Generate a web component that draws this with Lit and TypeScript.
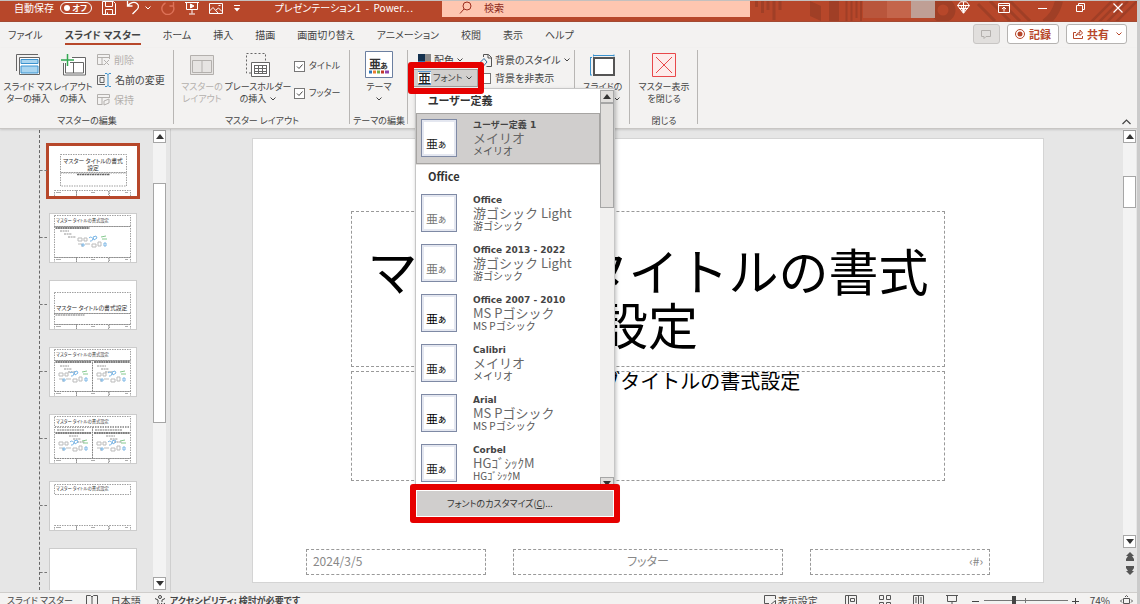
import { LitElement, html, svg, css } from "lit";
import { customElement, state } from "lit/decorators.js";
import { classMap } from "lit/directives/class-map.js";

const chevron = html`<svg class="chev" width="6" height="4" viewBox="0 0 6 4"><path d="M.5 .5 3 3 5.5 .5" fill="none" stroke="currentColor"/></svg>`;
const up = html`<svg width="8" height="5" viewBox="0 0 8 5"><path d="M0 5 4 0 8 5z" fill="#333"/></svg>`;
const down = html`<svg width="8" height="5" viewBox="0 0 8 5"><path d="M0 0 4 5 8 0z" fill="#333"/></svg>`;

interface FontTheme { name: string; heading: string; body: string; tone: string; }

const themes: FontTheme[] = [
  { name: "Office", heading: "游ゴシック Light", body: "游ゴシック", tone: "light" },
  { name: "Office 2013 - 2022", heading: "游ゴシック Light", body: "游ゴシック", tone: "light" },
  { name: "Office 2007 - 2010", heading: "MS Pゴシック", body: "MS Pゴシック", tone: "dark" },
  { name: "Calibri", heading: "メイリオ", body: "メイリオ", tone: "mid" },
  { name: "Arial", heading: "MS Pゴシック", body: "MS Pゴシック", tone: "dark" },
  { name: "Corbel", heading: "HGｺﾞｼｯｸM", body: "HGｺﾞｼｯｸM", tone: "mid" },
];
const custom: FontTheme = { name: "ユーザー定義 1", heading: "メイリオ", body: "メイリオ", tone: "mid" };

const tabs = ["ファイル", "スライド マスター", "ホーム", "挿入", "描画", "画面切り替え", "アニメーション", "校閲", "表示", "ヘルプ"];

const frame = (x: number, y: number, w: number, h: number) =>
  svg`<rect x=${x} y=${y} width=${w} height=${h} fill="none" stroke="#777" stroke-width=".7" stroke-dasharray="1.5 1"/>`;
const footers = svg`${frame(5.5, 44.5, 22, 7)}${frame(27.5, 44.5, 32, 7)}${frame(60.5, 44.5, 21, 7)}
  <path d="M7 46.5h5M42 46.5h4M76 46.5h3" stroke="#999" stroke-width=".8"/>`;
const caption = (x: number, y: number, size: number, text: string, anchor = "start") =>
  svg`<text x=${x} y=${y} font-size=${size} text-anchor=${anchor} fill="#333">${text}</text>`;
const picker = (x: number, y: number) => svg`
  <g transform="translate(${x} ${y})" fill="none" stroke-width="1">
    <path d="M0 3h4v3h-4zM6 3h3v3H6zM20 7h3v4h-3zM7 9h5M14 9h4v3h-4zM0 9h4v3" stroke="#bbb"/>
    <path d="M11 3a2 2 0 1 1 1 3M15 2l3-1 1 2-3 2zM4 9h2v2H4zM26 8h2v3h-2z" stroke="#7ab6e6"/>
    <path d="M23 2l5-1M24 4h5" stroke="#86c98f"/>
  </g>`;
const bullets = (x: number, y: number) => svg`
  <path d="M${x} ${y}h9M${x + 4} ${y + 3}h8M${x + 8} ${y + 6}h8" stroke="#888" stroke-width=".9" stroke-dasharray="2 .6"/>`;
const miniTitle = "マスター タイトルの書式設定";
const strip = "M6.5 15h34";

const thumbs = [
  svg`${frame(11.5, 8.5, 66, 18)}${frame(11.5, 27, 66, 13)}
    ${caption(44, 17, 5.8, "マスター タイトルの書式", "middle")}${caption(44, 24, 5.8, "設定", "middle")}
    <path d="M28 28.5h33" stroke="#666" stroke-width="1.4" stroke-dasharray="2 .5"/>${footers}`,
  svg`${frame(5.5, 2.5, 76, 11)}${frame(5.5, 13.5, 76, 31)}${caption(7, 9, 4.3, miniTitle)}
    <path d=${strip} stroke="#555" stroke-width="1.6" stroke-dasharray="2 .4"/>${bullets(11, 18)}${picker(29, 22)}${footers}`,
  svg`${frame(5.5, 12.5, 76, 21)}${frame(5.5, 33.5, 76, 11)}${caption(7, 30, 5.8, miniTitle)}
    <path d="M6.5 35h29" stroke="#777" stroke-width="1.2" stroke-dasharray="2 .5"/>${footers}`,
  svg`${frame(5.5, 2.5, 76, 11)}${frame(5.5, 13.5, 38, 31)}${frame(43.5, 13.5, 38, 31)}${caption(7, 9, 4.3, miniTitle)}
    <path d="M6.5 15h36M45 15h36" stroke="#555" stroke-width="1.6" stroke-dasharray="2 .4"/>
    ${bullets(11, 19)}${bullets(48, 19)}${picker(10, 23)}${picker(48, 23)}${footers}`,
  svg`${frame(5.5, 2.5, 76, 10)}${frame(5.5, 13.5, 38, 31)}${frame(43.5, 13.5, 38, 31)}${caption(7, 9, 4.3, miniTitle)}
    <path d="M8 16h27M46 16h27" stroke="#777" stroke-width="1.2" stroke-dasharray="2 .5"/>
    <path d="M6.5 19h36M45 19h36" stroke="#555" stroke-width="1.6" stroke-dasharray="2 .4"/>
    ${bullets(20, 22)}${bullets(57, 22)}${picker(10, 25)}${picker(48, 25)}${footers}`,
  svg`${frame(5.5, 3.5, 76, 10)}${caption(7, 9, 4.3, miniTitle)}${footers}`,
  svg``,
];

@customElement("app-root")
export class AppRoot extends LitElement {
  @state() private selected = 0;
  @state() private activeTab = 1;

  static styles = css`
    :host { display: flex; flex-direction: column; height: 100vh; overflow: hidden; box-sizing: border-box;
      border-top: 1px solid #c4c0be; border-right: 3px solid #cbcbcb; background: #e6e6e6; color: #444;
      font: 10px/14px "Noto Sans CJK JP", sans-serif; font-feature-settings: "palt"; }
    *, *::before, *::after { box-sizing: border-box; }
    button, input { font: inherit; font-feature-settings: inherit; color: inherit; margin: 0; }
    button { background: none; border: 0; padding: 0; white-space: nowrap; }
    svg { display: block; flex: none; }

    .titlebar { display: grid; grid-template-columns: 442fr 308fr 387fr; flex: none; height: 21px;
      background: #b7472a; color: #fff; border-bottom: 1px solid #a34a33; }
    .quick { display: flex; align-items: center; height: 14px; padding-left: 14px; }
    .auto { display: flex; align-items: center; gap: 6px; }
    .switch { position: relative; display: flex; }
    .switch input { appearance: none; width: 32px; height: 12px; border: 1px solid #fff; border-radius: 6px; }
    .switch input::before { content: ""; position: absolute; left: 4px; top: 3px; width: 6px; height: 6px; border-radius: 3px; background: #fff; }
    .switch span { position: absolute; right: 5px; top: 1px; font-size: 8px; line-height: 10px; font-weight: 700; }
    .tools { display: flex; align-items: center; gap: 10px; margin-left: 10px; }
    .undo { display: flex; align-items: center; gap: 5px; }
    .doc { margin-left: auto; padding-right: 29px; white-space: pre; }
    .search { display: flex; align-items: center; gap: 12px; height: 16px; padding: 0 0 3px 17px; background: #fec6b0; color: #8c2a1c; }
    .search input { flex: 1; min-width: 0; background: none; border: 0; padding: 0; outline: 0; height: 12px; }
    .search input::placeholder { color: #8c2a1c; opacity: 1; }
    .window { position: relative; display: flex; justify-content: flex-end; padding-right: 14px; overflow: hidden; }
    .pattern { position: absolute; right: 0; top: 0; }
    .account { position: relative; display: flex; height: 17px; margin-right: 22px; }
    .account i { width: 24px; background: #b9563c; }
    .account i:nth-child(2) { background: #c4654b; }
    .account i:nth-child(3) { background: #bf9f95; }
    .winbtns { position: relative; display: flex; align-items: center; gap: 28px; height: 13px; }

    .tabs { display: flex; align-items: center; flex: none; height: 26px; padding: 0 10px 2px 8px; background: #f3f2f1; }
    .tablist { display: flex; gap: 22px; flex: 1; }
    .tab { height: 22px; padding: 4px 0 0; border-bottom: 2px solid transparent; }
    .tab.on { font-weight: 700; border-color: #b7472a; }
    .actions { display: flex; gap: 7px; }
    .pill { display: flex; align-items: center; gap: 4px; height: 20px; padding: 0 7px; border: 1px solid #b5b3b1; border-radius: 3px;
      background: #fff; color: #b7472a; font-weight: 700; font-size: 11px; }
    .pill.off { background: #e1dfdd; border-color: #c8c6c4; color: #b3b0ad; }
    .pill.share { padding: 0 4px 0 6px; }
    .pill .chev { margin-left: 3px; }

    .ribbon { position: relative; z-index: 2; display: flex; flex: none; height: 81px; background: #f3f2f1;
      border-bottom: 1px solid #c8c6c4; box-shadow: 0 1px 2px #0002; font-size: 9px; line-height: 12px; }
    .group { display: flex; flex-direction: column; align-items: center; flex: none; position: relative; padding: 3px 4px 0; }
    .group::after { content: ""; position: absolute; right: 0; top: 2px; bottom: 4px; width: 1px; background: #b8b6b4; }
    .body { display: flex; flex: 1; width: 100%; }
    .name { height: 13px; line-height: 12px; white-space: nowrap; }
    .g1 { width: 174px; } .g2 { width: 176px; } .g3 { width: 58px; } .g4 { width: 167px; } .g5 { width: 55px; } .g6 { width: 68px; }
    .big { display: flex; flex-direction: column; align-items: center; text-align: center; gap: 4px; padding-top: 1px; width: 48px; flex: none; }
    .big.narrow { width: 42px; }
    .big.wide { width: 64px; }
    .big .icon { height: 25px; display: flex; align-items: center; }
    .big .text { height: 24px; display: flex; flex-direction: column; align-items: center; }
    .line { display: flex; align-items: center; gap: 4px; height: 12px; white-space: pre; }
    .off { color: #b3b0ad; }
    .fill { justify-content: center; }
    .column { display: flex; flex-direction: column; justify-content: space-between; padding: 2px 0 4px 3px; height: 60px; }
    .small { display: flex; align-items: center; gap: 4px; height: 14px; font-size: 10px; }
    .checks { display: flex; flex-direction: column; gap: 13px; padding: 8px 0 0 4px; }
    .check { display: flex; align-items: center; gap: 4px; height: 14px; white-space: nowrap; }
    .check input { appearance: none; width: 11px; height: 11px; border: 1px solid #777; background: #fff; }
    .check input:checked { background: #fff url("data:image/svg+xml,%3Csvg xmlns='http://www.w3.org/2000/svg' viewBox='0 0 9 9'%3E%3Cpath d='M2 4.5l2 2 3.500-4' fill='none' stroke='%23444'/%3E%3C/svg%3E"); }
    .variants { display: grid; grid-template-columns: 67px 1fr; grid-auto-rows: 18px; align-items: center; padding: 0 0 0 1px; align-content: start; font-size: 10px; }
    .variants .small { gap: 3px; }
    .variants .small:first-child { padding-left: 5px; }
    .fonts { position: relative; height: 18px; font-size: 9px; }
    .fontbtn { display: flex; align-items: center; gap: 2px; height: 18px; width: 65px; padding-left: 4px; background: #d2d0ce; border: 1px solid #a19f9d; }
    .fontbtn svg { overflow: visible; }
    .fontbtn .chev { margin-left: 2px; }
    .callout { position: absolute; inset: -7px; border: 6px solid #e60000; border-radius: 3px; pointer-events: none; }
    .fonts > .callout { inset: -7px -4px -7px -5px; z-index: 3; }
    .collapse { margin: auto 6px 3px auto; }

    .menu { position: absolute; left: 2px; top: 19px; width: 200px; z-index: 2; background: #fff; border: 1px solid #c6c6c6; border-bottom: 0;
      box-shadow: 1px 2px 4px #0004; color: #444; }
    .scroller { display: flex; height: 401px; overflow: hidden; }
    .list { flex: 1; min-width: 0; margin: 0; padding: 0; list-style: none; }
    .head { height: 24px; padding: 5px 12px 0; font-size: 11px; font-weight: 700; color: #333; }
    .head.second { border-top: 1px solid #e1dfdd; }
    .choice { display: grid; grid-template-columns: 36px 1fr; column-gap: 16px; align-items: start; width: 100%; height: 50px; padding: 6px 5px 0; text-align: left; }
    .choice.on { height: 51px; background: #d0cecd; box-shadow: inset 0 0 0 1px #a6a4a2; }
    .sample { display: flex; align-items: flex-end; height: 38px; padding: 0 0 4px 4px; border: 1px solid #7f8aa5; box-shadow: inset 0 0 0 2px #e4e7f0; background: #fff;
      font-size: 12px; line-height: 16px; color: #222; }
    .sample small { font-size: 10px; }
    .sample.light { color: #777; } .sample.dark { color: #000; }
    .desc { display: flex; flex-direction: column; font-feature-settings: normal; }
    .desc b { font: 700 9px/12px "DejaVu Sans", "Noto Sans CJK JP", sans-serif; }
    .desc span { font-size: 13px; line-height: 14px; color: #666; }
    .desc small { font-size: 10px; line-height: 12px; color: #555; }
    .custom { position: relative; height: 27px; width: 100%; border: 1px solid #fff; background: #d0cecd; text-align: left; padding-left: 30px; color: #333; }

    .bar { display: flex; flex-direction: column; width: 13px; background: #f3f3f3; flex: none; }
    .arrow { display: flex; align-items: center; justify-content: center; height: 13px; flex: none; background: #fff; border: 1px solid #a6a6a6; }
    .thumbbar { background: #fff; border: 1px solid #a6a6a6; }
    .menu .bar { background: #f1f0ef; width: 14px; padding-top: 1px; }
    .menu .arrow, .menu .thumbbar { background: #e1dfdd; }
    .menu .thumbbar { height: 105px; }
    .grow { flex: 1; }

    .main { display: flex; flex: 1; min-height: 0; }
    .pane { display: flex; flex: none; width: 171px; padding: 1px 4px 2px 0; border-right: 1px solid #cfcfcf; }
    .slides { flex: 1; margin: 0; padding: 16px 0 0 8px; margin-left: 39px; border-left: 1px dashed #666; list-style: none; overflow: hidden;
      display: flex; flex-direction: column; gap: 17px; }
    .slides li { position: relative; flex: none; height: 50px; }
    .slides li::before { content: ""; position: absolute; left: -8px; top: 24px; width: 7px; border-top: 1px dashed #777; }
    .thumb { display: block; width: 88px; height: 50px; margin-left: 1px; background: #fff; outline: 1px solid #ccc; outline-offset: -1px; }
    .thumb.on { outline: 3px solid #b7472a; outline-offset: 0; }
    .thumb text { font-family: "Noto Sans CJK JP", sans-serif; }
    .pane .lead { height: 40px; }
    .pane .thumbbar { height: 240px; }
    .stage { flex: 1; min-width: 0; display: flex; padding: 9px 79px 9px 81px; }
    .slide { flex: 1; display: flex; flex-direction: column; background: #fff; border: 1px solid #d4d4d4; padding: 72px 0 7px; color: #000; }
    .title, .sub { margin: 0 12.4%; border: 1px dashed #999; text-align: center; font-weight: 400; font-feature-settings: normal; }
    .title { display: flex; flex-direction: column; justify-content: flex-end; height: 156px; padding: 0 8px 16px; font-size: 50px; line-height: 54px; }
    .sub { height: 110px; margin-top: 4px; font-size: 20px; line-height: 18px; }
    .foot { display: grid; grid-template-columns: 180fr 269fr 180fr; column-gap: 27px; margin: auto 6.7% 0; color: #888; font-size: 12px; }
    .foot div { height: 26px; border: 1px dashed #999; padding: 0 6px; line-height: 22px; }
    .foot div:nth-child(2) { text-align: center; }
    .foot div:nth-child(3) { text-align: right; }
    .vert { padding-top: 1px; width: 13px; margin-right: 1px; }
    .vert .lead { height: 33px; }
    .vert .thumbbar { height: 32px; }
    .jump { display: flex; flex-direction: column; align-items: center; gap: 5px; padding: 4px 0 17px; background: #e6e6e6; }

    .status { display: flex; align-items: flex-start; flex: none; height: 12px; overflow: hidden; padding: 0 4px 0 7px; background: #f3f2f1; border-top: 1px solid #cfcdcb; line-height: 14px; white-space: nowrap; }
    .status > * { height: 15px; display: flex; align-items: center; }
    .left { gap: 13px; flex: 1; font-size: 9px; }
    .left .lang { font-size: 10px; }
    .a11y { display: flex; gap: 4px; align-items: center; font-weight: 700; }
    .views { gap: 22px; }
    .set { display: flex; align-items: center; gap: 2px; margin-right: 5px; }
    .zoom { gap: 4px; margin-left: 14px; }
    .zoom input { appearance: none; width: 84px; height: 12px; background: linear-gradient(#777, #777) 50% 50% / 1px 5px no-repeat, linear-gradient(#777, #777) 0 50% / 100% 1px no-repeat; }
    .zoom input::-webkit-slider-thumb { appearance: none; width: 4px; height: 10px; background: #444; }
    .pct { margin: 0 6px; }
  `;

  private choice(t: FontTheme, i: number) {
    return html`<li><button class=${classMap({ choice: true, on: this.selected === i })} @click=${() => (this.selected = i)}>
      <span class="sample ${t.tone}">亜<small>ぁ</small></span>
      <span class="desc"><b>${t.name}</b><span>${t.heading}</span><small>${t.body}</small></span>
    </button></li>`;
  }

  private titlebar() {
    return html`<header class="titlebar">
      <div class="quick">
        <label class="auto">自動保存<span class="switch"><input type="checkbox" role="switch" aria-label="自動保存"/><span>オフ</span></span></label>
        <div class="tools">
          <button aria-label="保存"><svg width="14" height="14" viewBox="0 0 14 14" fill="none" stroke="#fff"><path d="M.5.5h11l2 2v11H.5zM3.500 1v4.500h7V1M3.500 13.500v-5h7v5M5.500 13.500v-2"/></svg></button>
          <div class="undo"><button aria-label="元に戻す"><svg width="14" height="14" viewBox="0 0 14 14" fill="none" stroke="#fff" stroke-width="1.300"><path d="M1.500 0v5h5M1.500 5C4 2 8 0 11 2.500s1 5.500-1 7L6.500 13"/></svg></button>${chevron}</div>
          <button aria-label="やり直し"><svg width="14" height="14" viewBox="0 0 14 14" fill="none" stroke="#dd7258" stroke-width="1.400"><path d="M12.500 1v4h-4M12.500 5.500a6 6 0 1 1-8-3.500"/></svg></button>
          <button aria-label="スライド ショー"><svg width="14" height="14" viewBox="0 0 14 14" fill="none" stroke="#fff"><path d="M0 1.500h14M1.500 1.500v7h11v-7M7 8.500v4M4 13h6"/><path d="M5.500 3v4L9 5z" fill="#fff"/></svg></button>
          <button aria-label="画像"><svg width="14" height="12" viewBox="0 0 14 12" fill="none" stroke="#fff"><path d="M.5 1.500h13v10H.5zM.5 9 4 5.500l5 5.500M7 8l2.500-2L13 9.500"/><path d="M9.500 3.500h2"/></svg></button>
          <button aria-label="カスタマイズ"><svg width="8" height="7" viewBox="0 0 8 7" fill="#fff"><path d="M1 0h6v1H1zM1 3h6L4 6.500z"/></svg></button>
        </div>
        <span class="doc">プレゼンテーション1  -  Power…</span>
      </div>
      <label class="search"><svg width="13" height="13" viewBox="0 0 13 13" fill="none" stroke="#9c2f20"><circle cx="8" cy="5" r="4"/><path d="M5 8 1 12.500"/></svg>
        <input type="search" placeholder="検索" aria-label="検索"/></label>
      <div class="window">
        <svg class="pattern" width="387" height="21" viewBox="0 0 387 21" fill="none" stroke="#a03f26">
          <path d="M6.500 0v6M12.500 0v12M18 0v9M24 0v19M30 0v9" stroke-width="3"/>
          <path d="M60 0 71 5v15L60 15z" fill="#a03f26" stroke="none"/><path d="M84 0v20" stroke-width="10"/>
          <path d="M96.500 0v20M101.500 0v20M106.500 0v17M111 0v20" stroke-width="2"/>
          <circle cx="193" cy="9" r="9" stroke-width="7"/>
          <path d="M228 3l17 17M240 0l20 20M250 0l20 20M260 0l20 20" stroke-width="3"/>
          <path d="M309 0c-2 9-6 16-14 22" stroke-width="8"/>
          <path d="M341 21 362 0M349 21 370 0M357 21 378 0M366 21 387 0" stroke-width="2.500"/>
        </svg>
        <div class="account"><i></i><i></i><i></i></div>
        <div class="winbtns">
          <button aria-label="Premium"><svg width="13" height="13" viewBox="0 0 13 13" fill="none" stroke="#fff"><path d="M3.500.8h6l3 3.700-6 7.800-6-7.800zM.5 4.500h12M4 4.500l2.500 7.500L9 4.500M6.500 1v11M2 7.500h9"/></svg></button>
          <button aria-label="リボンの表示"><svg width="12" height="10" viewBox="0 0 12 10" fill="none" stroke="#fff"><path d="M.5.5h11v9H.5zM.5 2.500h11M6 8.500v-4M4 6l2-2 2 2"/></svg></button>
          <button aria-label="最小化"><svg width="10" height="10" viewBox="0 0 10 10" stroke="#fff"><path d="M0 5.500h9"/></svg></button>
          <button aria-label="元のサイズ"><svg width="9" height="9" viewBox="0 0 9 9" fill="none" stroke="#fff"><path d="M.5 2.500h6v6h-6zM2.500 2.500v-2h6v6h-2"/></svg></button>
          <button aria-label="閉じる"><svg width="10" height="10" viewBox="0 0 10 10" stroke="#fff" stroke-width="1.200"><path d="M.5.5l9 9M9.500.5l-9 9"/></svg></button>
        </div>
      </div>
    </header>`;
  }

  private ribbon() {
    return html`<section class="ribbon">
      <div class="group g1"><div class="body">
        <button class="big"><span class="icon"><svg width="24" height="21" viewBox="0 0 24 21" fill="none" stroke="#666"><path d="M.5 17V.5H22"/><path d="M3.500 3.500h20v17h-20z" fill="#fff"/><path d="M5 5.500h17v4H5zM5 12h17v7H5z" fill="#a9d5f0" stroke="#3b93cf"/></svg></span>
          <span class="text"><span class="line">スライド マス</span><span class="line">ターの挿入</span></span></button>
        <button class="big narrow"><span class="icon"><svg width="25" height="22" viewBox="0 0 25 22" fill="none" stroke="#666"><path d="M2.500 9v12h22V3.500H11" fill="#fff"/><path d="M4.500 9v10h18V8.500H9M12.500 9v10"/><path d="M6.500 0v12M0 6h13" stroke="#33a852" stroke-width="1.500"/></svg></span>
          <span class="text"><span class="line">レイアウト</span><span class="line">の挿入</span></span></button>
        <div class="column">
          <button class="small off" disabled><svg width="13" height="12" viewBox="0 0 13 12" fill="none" stroke="#b3b0ad"><path d="M12.500 5V.5H.5v10h6M.5 3.500h12M5 3.500V10M7 6l5 5M12 6l-5 5"/></svg>削除</button>
          <button class="small"><svg width="14" height="14" viewBox="0 0 14 14" fill="none" stroke="#666"><path d="M8 2.500H.5v9H8M3 4.500h4v5H3z"/><path d="M8 .5h2l1 1 1-1h2M11 1v12M8 13.500h2l1-1 1 1h2" stroke="#3b93cf"/></svg>名前の変更</button>
          <button class="small off" disabled><svg width="13" height="12" viewBox="0 0 13 12" fill="none" stroke="#b3b0ad"><path d="M12.500 4V.5H.5v10h5M.5 3.500h12M5 3.500V10M7 11V7l5-2v4z"/></svg>保持</button>
        </div></div><span class="name">マスターの編集</span></div>

      <div class="group g2"><div class="body">
        <button class="big off" disabled><span class="icon"><svg width="24" height="20" viewBox="0 0 24 20" fill="#e6e4e2" stroke="#b3b0ad"><path d="M.5.5h23v19H.5zM2.500 5.500h19v12h-19zM12 5.500v12"/></svg></span>
          <span class="text"><span class="line">マスターの</span><span class="line">レイアウト</span></span></button>
        <button class="big wide"><span class="icon"><svg width="24" height="24" viewBox="0 0 24 24" fill="none" stroke="#666"><path d="M5 20H.5V.5h19V8" stroke-dasharray="2 2"/><path d="M5.500 9.500h18v14h-18z" fill="#fff"/><path d="M8 12.500h13M8 15.500h13M8 18.500h13M8.500 12v9M12.500 12v9M16.500 12v9M20.500 12v9M8 20.500h13"/></svg></span>
          <span class="text"><span class="line">プレースホルダー</span><span class="line">の挿入${chevron}</span></span></button>
        <div class="checks"><label class="check"><input type="checkbox" checked/>タイトル</label><label class="check"><input type="checkbox" checked/>フッター</label></div>
      </div><span class="name">マスター レイアウト</span></div>

      <div class="group g3"><div class="body fill">
        <button class="big"><span class="icon"><svg width="28" height="27" viewBox="0 0 28 27"><path d="M.5.5h27v26H.5z" fill="#fff" stroke="#6b7fa0"/><text x="4" y="18" font-size="12" font-weight="700" fill="#333">亜</text><text x="15" y="18" font-size="9" font-weight="700" fill="#333">ぁ</text><g stroke-width="3"><path d="M4 21h3" stroke="#2e75b6"/><path d="M8 21h3" stroke="#ed7d31"/><path d="M12 21h3" stroke="#70ad47"/><path d="M16 21h3" stroke="#c0392b"/><path d="M20 21h4" stroke="#8e44ad"/></g></svg></span>
          <span class="text"><span class="line">テーマ</span><span class="line">${chevron}</span></span></button>
      </div><span class="name">テーマの編集</span></div>

      <div class="group g4"><div class="body variants">
        <button class="small"><svg width="13" height="13" viewBox="0 0 13 13"><path d="M0 0h7v7H0z" fill="#14324f"/><path d="M7 0h6v7H7z" fill="#8a8a8a"/><path d="M0 7h7v6H0z" fill="#2e75b6"/><path d="M7 7h6v6H7z" fill="#e0703a"/></svg>配色 ${chevron}</button>
        <button class="small"><svg width="12" height="13" viewBox="0 0 12 13" fill="none" stroke="#555"><path d="M3.500 3V.5h5l3 3v9h-5M8 .5v3.500h3.500"/><path d="M.5 8 4 4.500 7 8l-3.500 4z" stroke="#3b6f9c"/></svg>背景のスタイル ${chevron}</button>
        <div class="fonts">
          <button class="fontbtn" aria-haspopup="true" aria-expanded="true"><svg width="13" height="14" viewBox="0 0 13 14"><path d="M0 0h13v14H0z" fill="#fff"/><path d="M0 .5h13M0 13.500h13" stroke="#5b9bd5"/><text x="0" y="11.500" font-size="13" font-weight="500" fill="#222">亜</text></svg>フォント${chevron}</button>
          <div class="menu">
            <div class="scroller">
              <ul class="list"><li class="head">ユーザー定義</li>${this.choice(custom, 0)}<li class="head second">Office</li>${themes.map((t, i) => this.choice(t, i + 1))}</ul>
              <div class="bar"><span class="arrow">${up}</span><span class="thumbbar"></span><span class="grow"></span><span class="arrow">${down}</span></div>
            </div>
            <button class="custom">フォントのカスタマイズ(<u>C</u>)...<span class="callout"></span></button>
          </div>
          <span class="callout"></span>
        </div>
        <label class="check"><input type="checkbox"/>背景を非表示</label>
      </div><span class="name">背景</span></div>

      <div class="group g5"><div class="body fill">
        <button class="big"><span class="icon"><svg width="25" height="22" viewBox="0 0 25 22" fill="none"><path d="M4 4h20v17H4z" fill="#fff" stroke="#555" stroke-width="2"/><path d="M3.500.5v2M24 .5v2M3 1.500h21M.5 4v17M0 3.500h2M0 21h2" stroke="#3b93cf"/></svg></span>
          <span class="text"><span class="line">スライドの</span><span class="line">サイズ${chevron}</span></span></button>
      </div><span class="name">サイズ</span></div>

      <div class="group g6"><div class="body fill">
        <button class="big"><span class="icon"><svg width="24" height="24" viewBox="0 0 24 24" fill="#fdeceb" stroke="#e8484a"><path d="M.5.5h23v23H.5zM4 4l16 16M20 4 4 20"/></svg></span>
          <span class="text"><span class="line">マスター表示</span><span class="line">を閉じる</span></span></button>
      </div><span class="name">閉じる</span></div>
      <button class="collapse" aria-label="リボンを折りたたむ"><svg width="9" height="6" viewBox="0 0 9 6"><path d="M.5 5 4.500 1l4 4" fill="none" stroke="#444" stroke-width="1.200"/></svg></button>
    </section>`;
  }

  render() {
    return html`${this.titlebar()}
      <nav class="tabs">
        <div class="tablist">${tabs.map((t, i) => html`<button class=${classMap({ tab: true, on: i === this.activeTab })} @click=${() => (this.activeTab = i)}>${t}</button>`)}</div>
        <div class="actions">
          <button class="pill off" aria-label="コメント" disabled><svg width="11" height="9" viewBox="0 0 11 9"><path d="M.5.5h9v6H5l-2 2v-2H.5z" fill="none" stroke="#b3b0ad"/></svg></button>
          <button class="pill"><svg width="10" height="10" viewBox="0 0 10 10"><circle cx="5" cy="5" r="4.500" fill="none" stroke="#b7472a"/><circle cx="5" cy="5" r="2.500" fill="#b7472a"/></svg>記録</button>
          <button class="pill share"><svg width="10" height="10" viewBox="0 0 10 10" fill="none" stroke="#b7472a"><path d="M3 3.500H.5v6h9V7M3 7c0-2 2-3.500 4-3.500V1l2.500 3L7 6.500V5C5.500 5 4 5.500 3 7z"/></svg>共有${chevron}</button>
        </div>
      </nav>
      ${this.ribbon()}
      <main class="main">
        <aside class="pane">
          <ul class="slides">${thumbs.map((t, i) => html`<li><button class=${classMap({ thumb: true, on: i === 0 })} aria-label="レイアウト ${i + 1}"><svg width="88" height="50" viewBox="0 0 88 50">${t}</svg></button></li>`)}</ul>
          <div class="bar"><span class="arrow">${up}</span><span class="lead"></span><span class="thumbbar"></span><span class="grow"></span><span class="arrow">${down}</span></div>
        </aside>
        <div class="stage">
          <article class="slide">
            <div class="title">マスター タイトルの書式設定</div>
            <div class="sub">マスター サブタイトルの書式設定</div>
            <div class="foot"><div>2024/3/5</div><div>フッター</div><div>‹#›</div></div>
          </article>
        </div>
        <div class="bar vert"><span class="arrow">${up}</span><span class="lead"></span><span class="thumbbar"></span><span class="grow"></span><span class="arrow">${down}</span>
          <div class="jump"><svg width="8" height="9" viewBox="0 0 8 9"><path d="M4 0l4 4H6l2 3v2H0V7l2-3H0z" fill="#555"/></svg><svg width="8" height="9" viewBox="0 0 8 9"><path d="M4 9l4-4H6l2-3V0H0v2l2 3H0z" fill="#555"/></svg></div>
        </div>
      </main>
      <footer class="status">
        <div class="left"><span>スライド マスター</span>
          <svg width="12" height="11" viewBox="0 0 12 11" fill="none" stroke="#555"><path d="M.5.5h4L6 2l1.500-1.500h4v9h-4L6 11 4.500 9.500h-4zM6 2v8"/></svg>
          <span class="lang">日本語</span>
          <span class="a11y"><svg width="12" height="12" viewBox="0 0 12 12" fill="none" stroke="#444"><circle cx="6" cy="2" r="1.500"/><path d="M1 3.500l3 1.500v2.500L2.500 11.500 6 8.500M11 3.500 8 5v2M7 8l4 3.500M11 8l-4 3.500"/></svg>アクセシビリティ: 検討が必要です</span>
        </div>
        <div class="views">
          <button class="set"><svg width="12" height="11" viewBox="0 0 12 11" fill="none" stroke="#555"><path d="M11.500 4V.5H.5v8H5M5.500 10.500l6-5v5z"/></svg>表示設定</button>
          <svg width="12" height="11" viewBox="0 0 12 11" fill="none" stroke="#555"><path d="M.5.5h11v10H.5zM3.500.5v10M5.500 3.500h4v3h-4z"/></svg>
          <svg width="12" height="11" viewBox="0 0 12 11" fill="none" stroke="#555"><path d="M.5.5h4v4h-4zM7.500.5h4v4h-4zM.5 7.500h4v3h-4zM7.500 7.500h4v3h-4z"/></svg>
          <svg width="11" height="11" viewBox="0 0 11 11" fill="none" stroke="#555"><path d="M.5.5h10v10H.5zM5.500.5v10M2 3h2M2 5h2M2 7h2M7 3h2M7 5h2M7 7h2"/></svg>
          <svg width="12" height="11" viewBox="0 0 12 11" fill="none" stroke="#555"><path d="M0 .5h12M1.500.5v6h9v-6M6 6.500v4M3.500 10.500h5"/></svg>
        </div>
        <div class="zoom"><svg width="8" height="8" viewBox="0 0 8 8"><path d="M0 4.500h7" stroke="#444"/></svg>
          <input type="range" min="10" max="190" value="74" aria-label="ズーム"/>
          <svg width="8" height="8" viewBox="0 0 8 8"><path d="M0 4.500h7M3.500 1v7" stroke="#444"/></svg>
          <span class="pct">74%</span>
          <svg width="13" height="12" viewBox="0 0 13 12" fill="none" stroke="#555"><path d="M3.500 3.500h6v5h-6zM5 2l1.500-1.500L8 2M2 4.500.5 6 2 7.500M11 4.500 12.500 6 11 7.500M5 10l1.500 1.500L8 10"/></svg>
        </div>
      </footer>`;
  }
}
